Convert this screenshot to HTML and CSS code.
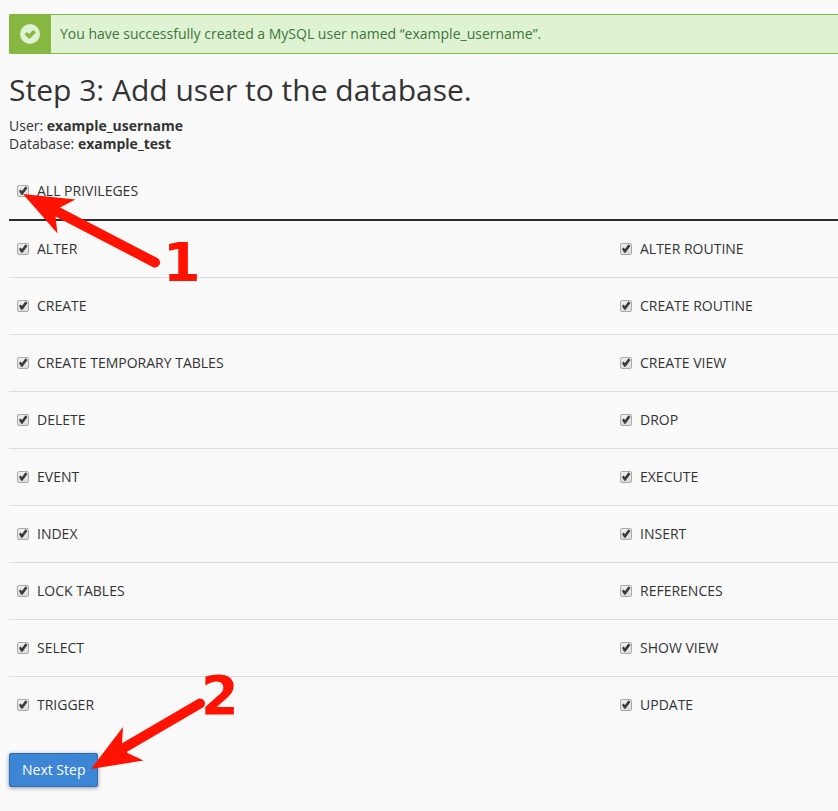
FILE: index.html
```html
<!DOCTYPE html>
<html lang="en">
<head>
<meta charset="utf-8">
<title>MySQL Database Wizard</title>
<link rel="stylesheet" href="styles.css">
</head>
<body>
<main class="page">
  <div class="alert" role="status">
    <span class="alert-icon">
      <svg width="20" height="20" viewBox="0 0 20 20" aria-hidden="true"><circle cx="10" cy="10" r="10" fill="#dff3d2"/><path d="M4.500 10.500 7 8 9.200 10 13.200 6 16 8.600 9.300 15Z" fill="#86b740"/></svg>
    </span>
    <span class="alert-text">You have successfully created a MySQL user named “example_username”.</span>
  </div>

  <h1>Step 3: Add user to the database.</h1>
  <p class="summary">User: <strong>example_username</strong><br>Database: <strong>example_test</strong></p>

  <form>
    <table class="privileges">
      <colgroup><col><col class="col-right"></colgroup>
      <thead>
        <tr><th colspan="2"><label><input type="checkbox" checked>ALL PRIVILEGES</label></th></tr>
      </thead>
      <tbody>
        <tr><td><label><input type="checkbox" checked>ALTER</label></td><td><label><input type="checkbox" checked>ALTER ROUTINE</label></td></tr>
        <tr><td><label><input type="checkbox" checked>CREATE</label></td><td><label><input type="checkbox" checked>CREATE ROUTINE</label></td></tr>
        <tr><td><label><input type="checkbox" checked>CREATE TEMPORARY TABLES</label></td><td><label><input type="checkbox" checked>CREATE VIEW</label></td></tr>
        <tr><td><label><input type="checkbox" checked>DELETE</label></td><td><label><input type="checkbox" checked>DROP</label></td></tr>
        <tr><td><label><input type="checkbox" checked>EVENT</label></td><td><label><input type="checkbox" checked>EXECUTE</label></td></tr>
        <tr><td><label><input type="checkbox" checked>INDEX</label></td><td><label><input type="checkbox" checked>INSERT</label></td></tr>
        <tr><td><label><input type="checkbox" checked>LOCK TABLES</label></td><td><label><input type="checkbox" checked>REFERENCES</label></td></tr>
        <tr><td><label><input type="checkbox" checked>SELECT</label></td><td><label><input type="checkbox" checked>SHOW VIEW</label></td></tr>
        <tr><td><label><input type="checkbox" checked>TRIGGER</label></td><td><label><input type="checkbox" checked>UPDATE</label></td></tr>
      </tbody>
    </table>
    <button class="next" type="button">Next Step</button>
  </form>

  <svg class="annotations" width="260" height="811" viewBox="0 0 260 811">
    <path d="M54 210 155 262.500" stroke="#ff1200" stroke-width="10" stroke-linecap="round"/>
    <path d="M23 194 75.500 199.500 60 207.500 55.500 216 57.500 233.500Z"/>
    <path d="M122 749 200 703.500" stroke="#ff1200" stroke-width="10" stroke-linecap="round"/>
    <path d="M91 769 123 727 122 744 127.500 753 143.500 760.500Z"/>
    <text x="163" y="281">1</text>
    <text x="201" y="714">2</text>
  </svg>
</main>
</body>
</html>
```
FILE: styles.css
```css
* {
  box-sizing: border-box;
}

body {
  margin: 0;
  background: #fafafa;
  color: #333;
  font: 14px/18px "Open Sans", "Noto Sans", sans-serif;
}

.page {
  position: relative;
  padding: 14px 0 24px 9px;
}

.alert {
  display: flex;
  min-height: 40px;
  border: 1px solid #86b740;
  border-right: 0;
  border-radius: 2px 0 0 2px;
  background: #dff3d2;
  color: #3c763d;
}

.alert-icon {
  display: flex;
  align-items: center;
  justify-content: center;
  width: 41px;
  padding-right: 1px;
  background: #86b740;
}

.alert-text {
  padding: 10px 9px;
}

h1 {
  margin: 19px 0 11px;
  font-size: 30px;
  line-height: 33px;
  font-weight: 400;
}

.summary {
  margin: 0 0 10px;
}

.privileges {
  width: 100%;
  border-collapse: separate;
  border-spacing: 0;
  table-layout: fixed;
}

.col-right {
  width: 226px;
}

th,
td {
  height: 57px;
  padding: 0 8px;
  text-align: left;
  font-weight: 400;
}

th {
  height: 58px;
  border-bottom: 2px solid #2b2d31;
}

td {
  border-top: 1px solid #ddd;
}

tbody tr:first-child td {
  height: 56px;
  border-top: 0;
}

tbody tr:nth-child(odd) {
  background: #f9f9f9;
}

label {
  display: inline-flex;
  align-items: center;
  gap: 8px;
}

input[type="checkbox"] {
  appearance: none;
  width: 12px;
  height: 12px;
  margin: 0;
  border: 1px solid #aaa;
  border-radius: 2px;
  background: linear-gradient(#eee, #ddd);
}

input[type="checkbox"]:checked::before {
  content: "";
  display: block;
  height: 10px;
  background: #3c3c3c;
  clip-path: polygon(10% 55%, 25% 40%, 40% 55%, 75% 8%, 95% 25%, 45% 92%, 32% 92%);
}

.next {
  display: block;
  margin-top: 20px;
  padding: 7px 12px;
  border: 1px solid #2a6ebb;
  border-radius: 2px;
  background: #3d85d5;
  box-shadow: 0 1px 4px rgba(0, 0, 0, 0.4);
  color: #fff;
  font: inherit;
}

.annotations {
  position: absolute;
  top: 0;
  left: 0;
  pointer-events: none;
  fill: #ff1200;
  font: bold 54px "DejaVu Sans", sans-serif;
}
```
